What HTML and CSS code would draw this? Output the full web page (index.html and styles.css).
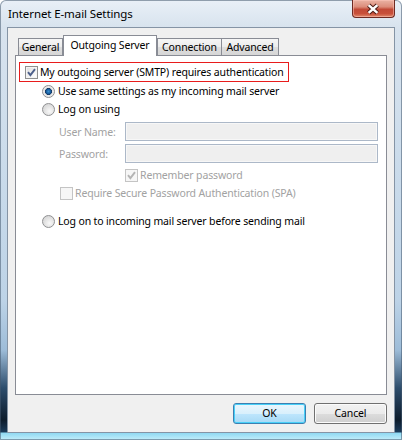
FILE: index.html
```html
<!DOCTYPE html>
<html>
<head>
<meta charset="utf-8">
<link rel="stylesheet" href="styles.css">
</head>
<body>
<div class="window">
  <div class="titlebar">
    <span class="title">Internet E-mail Settings</span>
    <div class="close">
      <svg width="43" height="18" viewBox="0 0 43 18">
        <path d="M17 5 L26 13 M26 5 L17 13" stroke="#4a1a14" stroke-width="4.6" fill="none"/>
        <path d="M17 5 L26 13 M26 5 L17 13" stroke="#ffffff" stroke-width="2.6" fill="none"/>
      </svg>
    </div>
  </div>
  <div class="client">
    <div class="tabs">
      <div class="tab t-general">General</div>
      <div class="tab active t-out">Outgoing Server</div>
      <div class="tab t-conn">Connection</div>
      <div class="tab t-adv">Advanced</div>
    </div>
    <div class="panel">
      <div class="auth-box">
        <span class="cb checked"><svg width="11" height="11" viewBox="0 0 11 11"><path d="M2 5.2 L4.4 8.2 L9 2.2" stroke="#4c5f8a" stroke-width="1.9" fill="none"/></svg></span>
        <span class="lbl">My outgoing server (SMTP) requires authentication</span>
      </div>
      <div class="row radio-row">
        <span class="rb selected"></span>
        <span class="lbl">Use same settings as my incoming mail server</span>
      </div>
      <div class="row radio-row">
        <span class="rb"></span>
        <span class="lbl">Log on using</span>
      </div>
      <div class="form">
        <div class="field">
          <span class="flabel">User Name:</span>
          <span class="input"></span>
        </div>
        <div class="field">
          <span class="flabel">Password:</span>
          <span class="input"></span>
        </div>
      </div>
      <div class="row remember-row">
        <span class="cb disabled"><svg width="11" height="11" viewBox="0 0 11 11"><path d="M2 5.2 L4.4 8.2 L9 2.2" stroke="#b4b4b4" stroke-width="1.9" fill="none"/></svg></span>
        <span class="lbl dim">Remember password</span>
      </div>
      <div class="row spa-row">
        <span class="cb disabled"></span>
        <span class="lbl dim">Require Secure Password Authentication (SPA)</span>
      </div>
      <div class="row radio-row last">
        <span class="rb"></span>
        <span class="lbl">Log on to incoming mail server before sending mail</span>
      </div>
    </div>
    <div class="buttons">
      <div class="btn default">OK</div>
      <div class="btn">Cancel</div>
    </div>
  </div>
</div>
</body>
</html>
```

FILE: styles.css
```css
* { box-sizing: border-box; }
html, body { margin: 0; padding: 0; }
body {
  width: 402px;
  height: 440px;
  overflow: hidden;
  font-family: "Noto Sans", "Open Sans", sans-serif;
  font-size: 10.5px;
  letter-spacing: -0.15px;
  color: #000;
}
.window {
  width: 402px;
  height: 440px;
  display: flex;
  flex-direction: column;
  border-radius: 6px 6px 0 0;
  background: linear-gradient(180deg, #e9f0f7 0px, #d8e3ee 27px, #cfdeec 120px, #bdd3e7 300px, #9dbcd8 350px, #2d4d6c 388px, #0d1c2c 420px, #1b3b5a 432px, #8fd9f2 433px, #c4eefa 440px);
  box-shadow: inset 0 0 0 1px rgba(70, 90, 112, 0.55);
}
.titlebar {
  height: 27px;
  display: flex;
  justify-content: space-between;
  align-items: flex-start;
  padding-left: 8px;
  padding-right: 7px;
}
.title {
  font-size: 11.5px;
  letter-spacing: -0.1px;
  line-height: 28px;
  color: #000;
}
.close {
  width: 43px;
  height: 18px;
  border: 1px solid #6e2a22;
  border-top: none;
  border-radius: 0 0 4px 4px;
  background: linear-gradient(180deg, #eab3a4 0%, #dc8d7b 40%, #c24a37 55%, #c8503a 80%, #e08a6c 100%);
  box-shadow: inset 0 0 0 1px rgba(255, 200, 190, 0.5);
  display: flex;
}
.close svg { display: block; margin-left: -1px; }
.client {
  flex: 1;
  margin: 0 7px 7px 7px;
  background: #f0f0f0;
  border: 1px solid #8594a5;
  padding: 7px 7px 8px 7px;
  display: flex;
  flex-direction: column;
}
.tabs {
  display: flex;
  align-items: flex-end;
  height: 21px;
  padding-left: 3px;
  margin-bottom: -1px;
  position: relative;
  z-index: 1;
}
.tab {
  height: 17px;
  margin-bottom: 1px;
  border: 1px solid #898c95;
  border-bottom: none;
  border-right: none;
  background: linear-gradient(180deg, #f6f6f6 0%, #ececec 50%, #dedede 51%, #d6d6d6 100%);
  display: flex;
  align-items: center;
  justify-content: center;
  line-height: 15px;
  white-space: nowrap;
}
.t-general { width: 45px; border-right: 1px solid #898c95; }
.t-out { width: 94px; }
.t-conn { width: 64px; }
.t-adv { width: 58px; border-right: 1px solid #898c95; }
.tab.active {
  height: 21px;
  margin-bottom: 0;
  background: #fff;
  border-right: 1px solid #898c95;
  padding-bottom: 2px;
}
.panel {
  flex: 1;
  background: #fff;
  border: 1px solid #898c95;
  padding: 6px 0 0 3px;
}
.auth-box {
  width: 270px;
  height: 20px;
  border: 1px solid #e81c1c;
  display: flex;
  align-items: center;
  padding-left: 5px;
  gap: 2px;
}
.row {
  display: flex;
  align-items: center;
  height: 18px;
}
.radio-row { margin-left: 23px; gap: 3px; }
.radio-row.last { margin-top: 10px; }
.lbl { line-height: 16px; white-space: nowrap; }
.dim { color: #a2a2a2; }
.form {
  margin-top: 4px;
  margin-left: 40px;
  display: flex;
  flex-direction: column;
  gap: 3px;
}
.field { display: flex; align-items: center; height: 19px; }
.flabel { width: 66px; color: #a2a2a2; line-height: 16px; }
.input {
  width: 253px;
  height: 19px;
  border: 1px solid #acb8c8;
  background: #efefef;
  box-shadow: inset 0 0 0 1px #f7f7f7;
}
.remember-row { margin-top: 3px; margin-left: 106px; gap: 2px; }
.spa-row { margin-left: 41px; gap: 2px; }
.cb {
  width: 13px;
  height: 13px;
  flex: none;
  border: 1px solid #8e8f8f;
  background: linear-gradient(135deg, #dcdcdc 0%, #f4f4f4 60%, #ffffff 100%);
  box-shadow: inset 0 0 0 1px #f4f4f4;
  display: flex;
  align-items: center;
  justify-content: center;
}
.cb svg { display: block; }
.cb.disabled {
  border-color: #c4c4c4;
  background: #f6f6f6;
  box-shadow: none;
}
.rb {
  width: 13px;
  height: 13px;
  flex: none;
  border-radius: 50%;
  border: 1px solid #8f9092;
  background: radial-gradient(circle at 60% 65%, #f9f9f9 0%, #e0e0e0 55%, #cfcfcf 100%);
  position: relative;
}
.rb.selected {
  background: radial-gradient(circle at 50% 50%, #3a8fd0 0%, #155a9a 30%, #17365e 42%, #e6e6e6 48%, #f4f4f4 100%);
}
.buttons {
  margin-top: 8px;
  display: flex;
  justify-content: flex-end;
  gap: 8px;
}
.btn {
  width: 73px;
  height: 21px;
  border: 1px solid #707070;
  border-radius: 3px;
  background: linear-gradient(180deg, #f2f2f2 0%, #ebebeb 50%, #dddddd 51%, #cfcfcf 100%);
  box-shadow: inset 0 0 0 1px #fbfbfb;
  display: flex;
  align-items: center;
  justify-content: center;
  line-height: 15px;
}
.btn.default {
  border-color: #3c7fb1;
  background: linear-gradient(180deg, #eaf6fd 0%, #d9f0fc 50%, #bee6fd 51%, #a7d9f5 100%);
  box-shadow: inset 0 0 0 1px #48d0f8;
}
```
